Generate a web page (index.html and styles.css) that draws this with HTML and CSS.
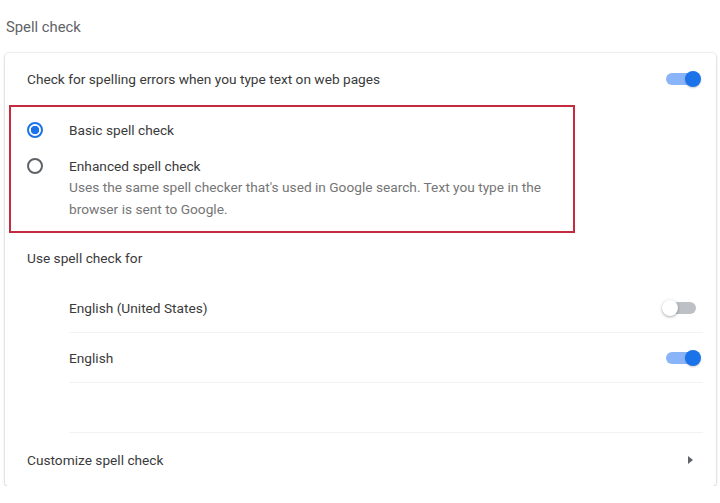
FILE: index.html
```html
<!doctype html>
<html lang="en">
    <head>
        <meta charset="UTF-8" />
        <meta name="viewport" content="width=device-width, initial-scale=1.0" />
        <title>Spell check</title>
        <link rel="stylesheet" href="styles.css">
    </head>
    <body>
        <div class="page">
            <h2 class="section-title">Spell check</h2>

            <div class="card">
                <!-- Main toggle -->
                <div class="row">
                    <span>Check for spelling errors when you type text on web pages</span>
                    <span class="toggle on"><span class="knob"></span></span>
                </div>

                <!-- Spell check type (highlighted) -->
                <div class="highlight">
                    <div class="radio-row">
                        <span class="radio checked"></span>
                        <span class="radio-label">Basic spell check</span>
                    </div>
                    <div class="radio-row tall">
                        <span class="radio"></span>
                        <div class="radio-text">
                            <div class="radio-label">Enhanced spell check</div>
                            <div class="radio-desc">Uses the same spell checker that's used in Google search. Text you type in the browser is sent to Google.</div>
                        </div>
                    </div>
                </div>

                <div class="row plain">Use spell check for</div>

                <!-- Languages -->
                <div class="lang-list">
                    <div class="lang-row">
                        <span>English (United States)</span>
                        <span class="toggle"><span class="knob"></span></span>
                    </div>
                    <div class="lang-row">
                        <span>English</span>
                        <span class="toggle on"><span class="knob"></span></span>
                    </div>
                    <div class="lang-row"></div>
                </div>

                <div class="row link-row">
                    <span>Customize spell check</span>
                    <span class="arrow"></span>
                </div>
            </div>
        </div>
    </body>
</html>
```

FILE: styles.css
```css
body {
    font-family: Roboto, "Liberation Sans", Arial, sans-serif;
    font-size: 13.7px;
    color: #3a3a3a;
    margin: 0;
    padding: 0;
    background: #fff;
}
.page {
    padding: 17px 4px 0 5px;
}
.section-title {
    font-size: 14.8px;
    font-weight: 400;
    color: #5f6368;
    line-height: 20px;
    margin: 0 0 16px 1px;
}
.card {
    width: 711px;
    background: #fff;
    border-radius: 4px;
    box-shadow: 0 1px 3px rgba(60, 64, 67, 0.25), 0 0 0 1px rgba(60, 64, 67, 0.05);
}
.row {
    display: flex;
    align-items: center;
    justify-content: space-between;
    height: 52px;
    padding: 0 20px 0 22px;
}
.row.plain {
    height: 50px;
}
.row.link-row {
    height: 53px;
    padding-right: 23px;
}
.highlight {
    box-sizing: border-box;
    width: 566px;
    height: 128px;
    margin-left: 4px;
    border: 2px solid #c42b3e;
}
.radio-row {
    display: flex;
    align-items: center;
    height: 46px;
    padding-left: 16px;
}
.radio-row.tall {
    align-items: flex-start;
    height: auto;
    padding-top: 3px;
}
.radio {
    box-sizing: border-box;
    width: 16px;
    height: 16px;
    border: 2px solid #5f6368;
    border-radius: 50%;
    margin-right: 26px;
    flex-shrink: 0;
}
.radio-row.tall .radio {
    margin-top: 2px;
}
.radio.checked {
    border-color: #1a73e8;
    background: radial-gradient(circle, #1a73e8 0 4px, #fff 4.5px);
}
.radio-label {
    line-height: 20px;
}
.radio-desc {
    color: #757575;
    line-height: 22px;
    max-width: 500px;
}
.lang-list {
    margin: 0 13px 0 64px;
}
.lang-row {
    box-sizing: border-box;
    display: flex;
    align-items: center;
    justify-content: space-between;
    height: 50px;
    padding-right: 7px;
    border-bottom: 1px solid #f2f2f2;
}
.toggle {
    position: relative;
    width: 30px;
    height: 12px;
    border-radius: 6px;
    background: #bdc1c6;
}
.toggle .knob {
    position: absolute;
    top: -2px;
    left: -4px;
    width: 16px;
    height: 16px;
    border-radius: 50%;
    background: #fff;
    box-shadow: 0 1px 3px rgba(0, 0, 0, 0.35);
}
.toggle.on {
    background: #8ab4f8;
}
.toggle.on .knob {
    left: auto;
    right: -5px;
    background: #1a73e8;
    box-shadow: 0 1px 2px rgba(0, 0, 0, 0.2);
}
.arrow {
    width: 0;
    height: 0;
    border-left: 5px solid #5f6368;
    border-top: 4px solid transparent;
    border-bottom: 4px solid transparent;
}
```
